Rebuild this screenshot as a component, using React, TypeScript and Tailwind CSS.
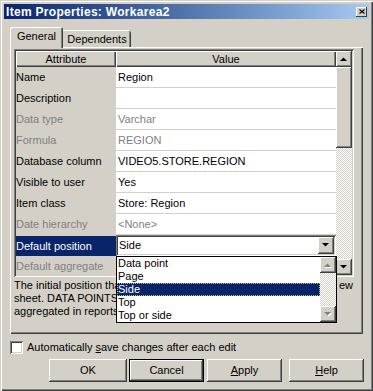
import React from "react";

const raised =
  "shadow-[inset_-1px_-1px_#404040,inset_1px_1px_#ffffff,inset_-2px_-2px_#808080,inset_2px_2px_#D4D0C8]";
const sunken =
  "shadow-[inset_1px_1px_#808080,inset_-1px_-1px_#ffffff,inset_2px_2px_#404040,inset_-2px_-2px_#D4D0C8]";
const checker =
  "bg-[image:repeating-conic-gradient(#ffffff_0_25%,#D4D0C8_0_50%)] bg-[length:2px_2px]";

function Tri({ dir, disabled }: { dir: "up" | "down"; disabled?: boolean }) {
  const pts = dir === "up" ? "0,4 7,4 3.5,0.5" : "0,0 7,0 3.5,3.5";
  return (
    <svg width="8" height="5" viewBox="0 0 8 5" className="block">
      {disabled && (
        <polygon points={pts} fill="#ffffff" transform="translate(1,1)" />
      )}
      <polygon points={pts} fill={disabled ? "#808080" : "#000000"} />
    </svg>
  );
}

function ScrollBtn({ dir, disabled }: { dir: "up" | "down"; disabled?: boolean }) {
  return (
    <div className={`w-[16px] h-[16px] shrink-0 bg-[#D4D0C8] ${raised} flex items-center justify-center`}>
      <Tri dir={dir} disabled={disabled} />
    </div>
  );
}

type Row = { a: string; v: string; dim?: boolean; combo?: boolean };

const rows: Row[] = [
  { a: "Name", v: "Region" },
  { a: "Description", v: "" },
  { a: "Data type", v: "Varchar", dim: true },
  { a: "Formula", v: "REGION", dim: true },
  { a: "Database column", v: "VIDEO5.STORE.REGION" },
  { a: "Visible to user", v: "Yes" },
  { a: "Item class", v: "Store: Region" },
  { a: "Date hierarchy", v: "<None>", dim: true },
  { a: "Default position", v: "Side", combo: true },
  { a: "Default aggregate", v: "", dim: true },
];

const options = ["Data point", "Page", "Side", "Top", "Top or side"];

function Button({ children, def, w }: { children: React.ReactNode; def?: boolean; w: string }) {
  return (
    <div
      className={`${w} h-[23px] shrink-0 bg-[#D4D0C8] flex items-center justify-center text-black ${
        def
          ? "border border-black shadow-[inset_-1px_-1px_#404040,inset_1px_1px_#ffffff,inset_-2px_-2px_#808080]"
          : raised
      }`}
    >
      {children}
    </div>
  );
}

export default function App() {
  return (
    <div
      className={`relative w-[373px] h-[391px] overflow-hidden bg-[#D4D0C8] p-[4px] flex flex-col text-[11px] leading-[13px] text-black font-['Liberation_Sans',Arial,sans-serif] shadow-[inset_1px_1px_#D4D0C8,inset_2px_2px_#ffffff,inset_-1px_-1px_#404040,inset_-2px_-2px_#808080]`}
    >
      {/* Title bar */}
      <div className="h-[15px] w-[365px] flex items-center justify-between bg-gradient-to-r from-[#0A246A] to-[#A6CAF0]">
        <span className="pl-[2px] font-bold text-white text-[12px] tracking-[0.3px] leading-[14px]">
          Item Properties: Workarea2
        </span>
        <div className={`mr-[2px] w-[11px] h-[10px] bg-[#D4D0C8] shadow-[inset_-1px_-1px_#404040,inset_1px_1px_#ffffff] flex items-center justify-center`}>
          <svg width="6" height="5" viewBox="0 0 6 5" className="block">
            <path d="M0.5 0.5 L5.5 4.5 M5.5 0.5 L0.5 4.5" stroke="#000" strokeWidth="1.1" />
          </svg>
        </div>
      </div>

      {/* Tabs */}
      <div className="mt-[8px] ml-[6px] h-[20px] flex items-end">
        <div className="relative z-10 -mb-px w-[53px] h-[21px] bg-[#D4D0C8] rounded-t-[2px] shadow-[inset_1px_1px_#ffffff,inset_-1px_0_#404040,inset_-2px_0_#808080] flex items-start justify-center pt-[3px]">
          General
        </div>
        <div className="w-[68px] h-[17px] bg-[#D4D0C8] rounded-tr-[2px] shadow-[inset_0_1px_#ffffff,inset_-1px_0_#404040,inset_-2px_0_#808080] flex items-start justify-center pt-[3px]">
          Dependents
        </div>
      </div>

      {/* Tab panel */}
      <div className="ml-[6px] w-[353px] h-[287px] pl-[4px] pt-[2px] flex flex-col shadow-[inset_1px_1px_#ffffff,inset_-1px_-1px_#404040,inset_-2px_-2px_#808080]">
        {/* Grid */}
        <div className={`w-[340px] h-[228px] p-[2px] flex bg-[#D4D0C8] ${sunken}`}>
          <div className="w-[320px] h-full flex flex-col overflow-hidden">
            <div className="h-[16px] shrink-0 flex">
              <div className="w-[100px] h-full flex items-center justify-center shadow-[inset_1px_1px_#ffffff,inset_-1px_-1px_#404040,inset_-2px_-2px_#808080]">
                Attribute
              </div>
              <div className="w-[220px] h-full flex items-center justify-center shadow-[inset_1px_1px_#ffffff,inset_-1px_-1px_#404040,inset_-2px_-2px_#808080]">
                Value
              </div>
            </div>
            {rows.map((r) =>
              r.combo ? (
                <div key={r.a} className="h-[21px] shrink-0 flex">
                  <div className="w-[100px] h-[20px] mt-px bg-[#0A246A] text-white flex items-center">
                    {r.a}
                  </div>
                  <div className={`w-[220px] h-[21px] p-[2px] bg-white flex ${sunken}`}>
                    <div className="flex-1 flex items-center pl-[1px]">{r.v}</div>
                    <div className={`w-[16px] h-full bg-[#D4D0C8] ${raised} flex items-center justify-center`}>
                      <Tri dir="down" />
                    </div>
                  </div>
                </div>
              ) : (
                <div key={r.a} className="h-[21px] shrink-0 flex border-b border-[#D4D0C8]">
                  <div className={`w-[100px] h-full bg-[#D4D0C8] flex items-center ${r.dim ? "text-[#808080]" : ""}`}>
                    {r.a}
                  </div>
                  <div className={`w-[220px] h-full bg-white flex items-center pl-[2px] ${r.dim ? "text-[#808080]" : ""}`}>
                    {r.v}
                  </div>
                </div>
              )
            )}
          </div>
          {/* Grid scrollbar */}
          <div className="w-[16px] h-full flex flex-col">
            <ScrollBtn dir="up" />
            <div className={`h-[81px] shrink-0 bg-[#D4D0C8] ${raised}`} />
            <div className={`flex-1 ${checker}`} />
            <ScrollBtn dir="down" />
          </div>
        </div>

        {/* Description (partly covered by the open list) */}
        <div className="mt-[2px] w-[339px] flex flex-col leading-[13px]">
          <div className="flex justify-between whitespace-nowrap">
            <span className="w-[102px] overflow-hidden">The initial position that the item takes</span>
            <span className="w-[14px] overflow-hidden flex justify-end">new</span>
          </div>
          <div className="w-[102px] overflow-hidden whitespace-nowrap">sheet. DATA POINTS are the data values</div>
          <div className="w-[102px] overflow-hidden whitespace-nowrap">aggregated in reports.</div>
        </div>
      </div>

      {/* Checkbox */}
      <div className="mt-[7px] ml-[6px] flex items-center h-[13px]">
        <div className={`w-[13px] h-[13px] bg-white ${sunken}`} />
        <span className="ml-[4px]">
          Automatically <u>s</u>ave changes after each edit
        </span>
      </div>

      {/* Buttons */}
      <div className="mt-[5px] flex">
        <div className="ml-[45px]">
          <Button w="w-[78px]">OK</Button>
        </div>
        <div className="ml-[2px]">
          <Button w="w-[75px]" def>
            Cancel
          </Button>
        </div>
        <div className="ml-[3px]">
          <Button w="w-[75px]">
            <span>
              <u>A</u>pply
            </span>
          </Button>
        </div>
        <div className="ml-[7px]">
          <Button w="w-[75px]">
            <span>
              <u>H</u>elp
            </span>
          </Button>
        </div>
      </div>

      {/* Dropdown list overlay */}
      <div className="absolute left-[116px] top-[256px] w-[221px] h-[67px] border border-black bg-white flex">
        <div className="w-[203px] flex flex-col">
          {options.map((o) =>
            o === "Side" ? (
              <div
                key={o}
                className="h-[13px] bg-[#0A246A] text-white flex items-center pl-[1px] outline-1 outline-dotted outline-offset-[-1px] outline-[#C8C070]"
              >
                {o}
              </div>
            ) : (
              <div key={o} className="h-[13px] flex items-center pl-[1px]">
                {o}
              </div>
            )
          )}
        </div>
        <div className="w-[16px] h-full flex flex-col">
          <ScrollBtn dir="up" disabled />
          <div className={`flex-1 ${checker}`} />
          <ScrollBtn dir="down" disabled />
        </div>
      </div>
    </div>
  );
}
